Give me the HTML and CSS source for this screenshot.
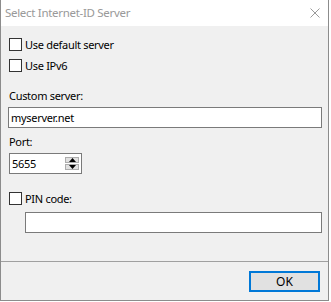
FILE: index.html
```html
<!DOCTYPE html>
<html lang="en">
<head>
  <meta charset="UTF-8">
  <title>Select Internet-ID Server</title>
  <link rel="stylesheet" href="styles.css">
</head>
<body>
  <div class="window">
    <div class="titlebar">
      <span class="title">Select Internet-ID Server</span>
      <svg class="close" width="10" height="10" viewBox="0 0 10 10">
        <path d="M0.5 0.5 L9.5 9.5 M9.5 0.5 L0.5 9.5" stroke="#9a9a9a" stroke-width="1" fill="none"/>
      </svg>
    </div>

    <div class="content">
      <label class="check row-default"><span class="box"></span>Use default server</label>
      <label class="check row-ipv6"><span class="box"></span>Use IPv6</label>

      <div class="field-label label-server">Custom server:</div>
      <div class="textbox server-box">myserver.net</div>

      <div class="field-label label-port">Port:</div>
      <div class="spinner">
        <span class="spin-value">5655</span>
        <div class="spin-buttons">
          <span class="spin-btn"><svg width="7" height="4" viewBox="0 0 7 4"><path d="M0 4 L3.5 0 L7 4 Z" fill="#000"/></svg></span>
          <span class="spin-btn"><svg width="7" height="4" viewBox="0 0 7 4"><path d="M0 0 L3.5 4 L7 0 Z" fill="#000"/></svg></span>
        </div>
      </div>

      <label class="check row-pin"><span class="box"></span>PIN code:</label>
      <div class="textbox pin-box"></div>
    </div>

    <div class="footer">
      <button class="ok-btn">OK</button>
    </div>
  </div>
</body>
</html>
```

FILE: styles.css
```css
/* Windows-style dialog */
body {
  margin: 0;
  padding: 0;
  background: #fff;
  font-family: 'Segoe UI', 'Noto Sans', sans-serif;
  font-size: 11px;
  letter-spacing: -0.3px;
  color: #000;
}
.window {
  width: 329px;
  height: 301px;
  box-sizing: border-box;
  border: 1px solid #8c8c8c;
  border-top: none;
  background: #f0f0f0;
  display: flex;
  flex-direction: column;
}
.titlebar {
  height: 26px;
  background: #fff;
  display: flex;
  align-items: center;
  justify-content: space-between;
  padding: 0 8px 0 4px;
}
.title {
  color: #999;
  font-size: 11.5px;
  letter-spacing: -0.3px;
  margin-top: -1px;
}
.close {
  margin-top: -1px;
}
.content {
  height: 235px;
  padding: 0 6px 0 7px;
  box-sizing: border-box;
}
.check {
  display: flex;
  align-items: center;
  height: 13px;
  margin-left: 1px;
  line-height: 15px;
}
.box {
  width: 13px;
  height: 13px;
  box-sizing: border-box;
  border: 1px solid #333;
  background: #fff;
  margin-right: 3px;
  flex-shrink: 0;
}
.row-default {
  margin-top: 12px;
}
.row-ipv6 {
  margin-top: 8px;
}
.field-label {
  line-height: 15px;
  margin-left: 1px;
}
.label-server {
  margin-top: 16px;
}
.label-port {
  margin-top: 6px;
}
.textbox {
  height: 21px;
  box-sizing: border-box;
  border: 1px solid #7a7a7a;
  background: #fff;
  padding: 0 2px;
  line-height: 19px;
  margin-top: 4px;
}
.spinner {
  width: 73px;
  height: 21px;
  box-sizing: border-box;
  border: 1px solid #7a7a7a;
  background: #fff;
  margin: 4px 0 0 1px;
  display: flex;
  align-items: center;
  justify-content: space-between;
  padding: 0 2px 0 2px;
}
.spin-buttons {
  display: flex;
  flex-direction: column;
  gap: 1px;
}
.spin-btn {
  width: 14px;
  height: 6px;
  box-sizing: border-box;
  border: 1px solid #adadad;
  background: #e1e1e1;
  display: flex;
  align-items: center;
  justify-content: center;
}
.row-pin {
  margin-top: 18px;
}
.pin-box {
  margin: 7px 0 0 17px;
}
.footer {
  flex: 1;
  border-top: 1px solid #a0a0a0;
  display: flex;
  justify-content: flex-end;
  align-items: flex-start;
  padding: 9px 8px 0 0;
}
.ok-btn {
  width: 71px;
  height: 21px;
  box-sizing: border-box;
  border: 2px solid #0078d7;
  background: #e1e1e1;
  font-family: inherit;
  font-size: 12px;
  letter-spacing: 0;
  color: #000;
  padding: 0;
}
```
